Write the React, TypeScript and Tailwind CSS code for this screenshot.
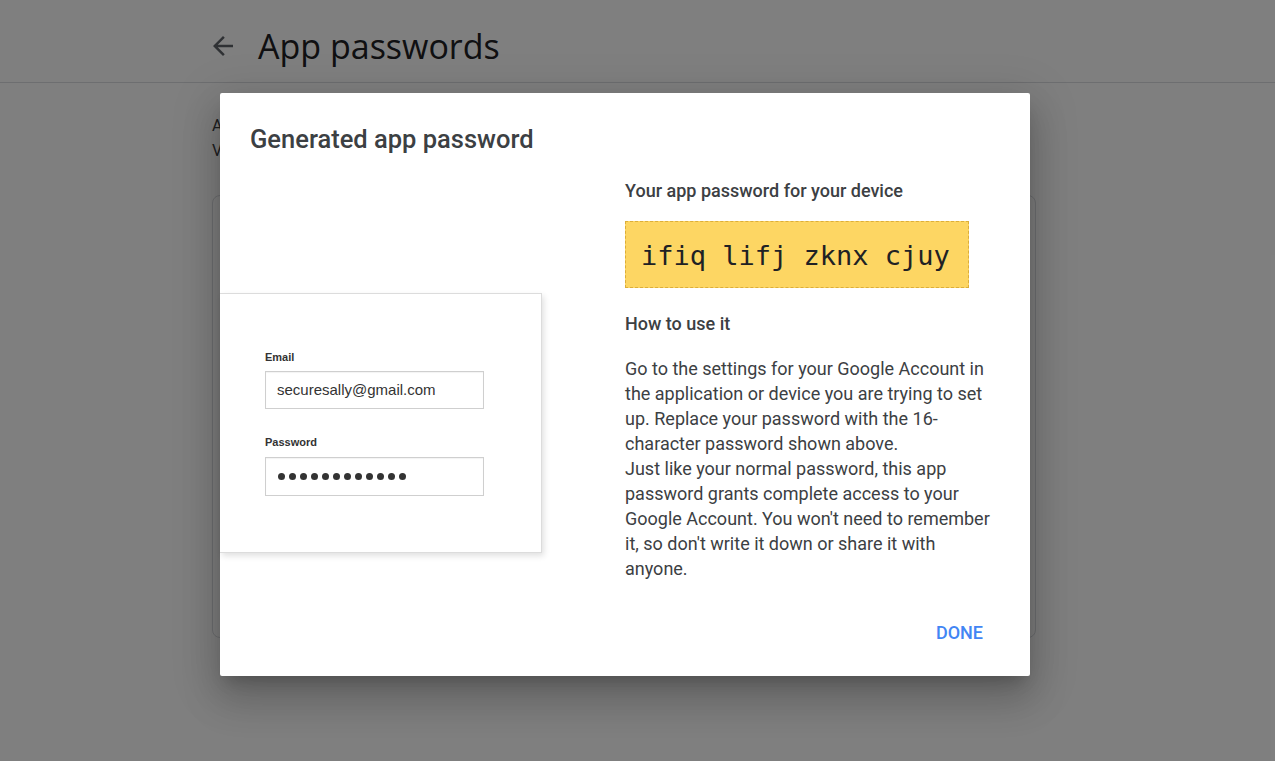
import React from 'react';

const ArrowBack = () => (
  <svg viewBox="0 0 24 24" className="h-[30px] w-[30px] fill-[#5f6368]">
    <path d="M20 11H7.83l5.59-5.59L12 4l-8 8 8 8 1.41-1.41L7.83 13H20v-2z" />
  </svg>
);

const LoginMock = () => (
  <div className="h-[260px] w-[322px] border border-l-0 border-[#dcdcdc] bg-white pl-[45px] pt-[56px] shadow-[2px_3px_6px_rgba(0,0,0,0.12)] font-['Liberation_Sans',Arial,sans-serif] text-[#333]">
    <div className="text-[11px] font-bold leading-[14px]">Email</div>
    <div className="mt-[7px] flex h-[38px] w-[219px] items-center border border-[#cfcfcf] px-[11px] text-[15px] shadow-[inset_0_1px_1px_rgba(0,0,0,0.05)]">
      securesally@gmail.com
    </div>
    <div className="mt-[26px] text-[11px] font-bold leading-[14px]">Password</div>
    <div className="mt-[8px] flex h-[39px] w-[219px] items-center gap-[4px] border border-[#cfcfcf] px-[12px] shadow-[inset_0_1px_1px_rgba(0,0,0,0.05)]">
      {Array.from({ length: 12 }).map((_, i) => (
        <span key={i} className="h-[7px] w-[7px] rounded-full bg-[#333]" />
      ))}
    </div>
  </div>
);

export default function App() {
  return (
    <div className="relative h-[761px] w-[1275px] overflow-hidden bg-white font-['Roboto',sans-serif]">
      {/* page behind the dialog */}
      <header className="flex h-[83px] items-center gap-[20px] border-b border-[#dadce0] pl-[208px] pt-[10px]">
        <ArrowBack />
        <h1 className="font-['Open_Sans',sans-serif] text-[34px] leading-[40px] text-[#202124]">App passwords</h1>
      </header>
      <main className="ml-[212px] w-[824px]">
        <p className="mt-[30px] text-[16px] leading-[25px] text-[#3c4043]">
          App passwords let you sign in to your Google Account from apps on devices that don't support 2-Step
          <br />
          Verification. You'll only need to enter it once so you don't need to remember it.
        </p>
        <div className="mt-[32px] h-[443px] rounded-lg border border-[#dadce0]" />
      </main>

      {/* overlay + dialog */}
      <div className="absolute inset-0 bg-black/50 pl-[220px] pt-[93px]">
        <div className="flex h-[583px] w-[810px] flex-col rounded-[2px] bg-white shadow-[0_11px_15px_-7px_rgba(0,0,0,0.2),0_24px_38px_3px_rgba(0,0,0,0.14),0_9px_46px_8px_rgba(0,0,0,0.12)]">
          <h2 className="px-[30px] pt-[31px] text-[25.5px] font-medium leading-[30px] text-[#3c4043]">
            Generated app password
          </h2>
          <div className="flex flex-1">
            <div className="w-[405px] pt-[139px]">
              <LoginMock />
            </div>
            <div className="w-[370px] pt-[25px] text-[#3c4043]">
              <div className="text-[18px] font-medium leading-[24px]">Your app password for your device</div>
              <div className="mt-[18px] flex h-[67px] w-[344px] items-center border border-dashed border-[#dcae3a] bg-[#fdd663] pl-[15px] pt-[3px] font-['DejaVu_Sans_Mono',monospace] text-[27px] text-[#202124]">
                ifiq lifj zknx cjuy
              </div>
              <div className="mt-[24px] text-[18px] font-medium leading-[24px]">How to use it</div>
              <p className="mt-[20px] text-[18px] leading-[25px]">
                Go to the settings for your Google Account in the application or device you are trying to set up. Replace
                your password with the 16-character password shown above.
                <br />
                Just like your normal password, this app password grants complete access to your Google Account. You
                won't need to remember it, so don't write it down or share it with anyone.
              </p>
            </div>
          </div>
          <div className="flex justify-end pb-[31px] pr-[47px]">
            <button className="text-[18px] font-medium uppercase leading-[24px] text-[#4285f4]">Done</button>
          </div>
        </div>
      </div>
    </div>
  );
}
